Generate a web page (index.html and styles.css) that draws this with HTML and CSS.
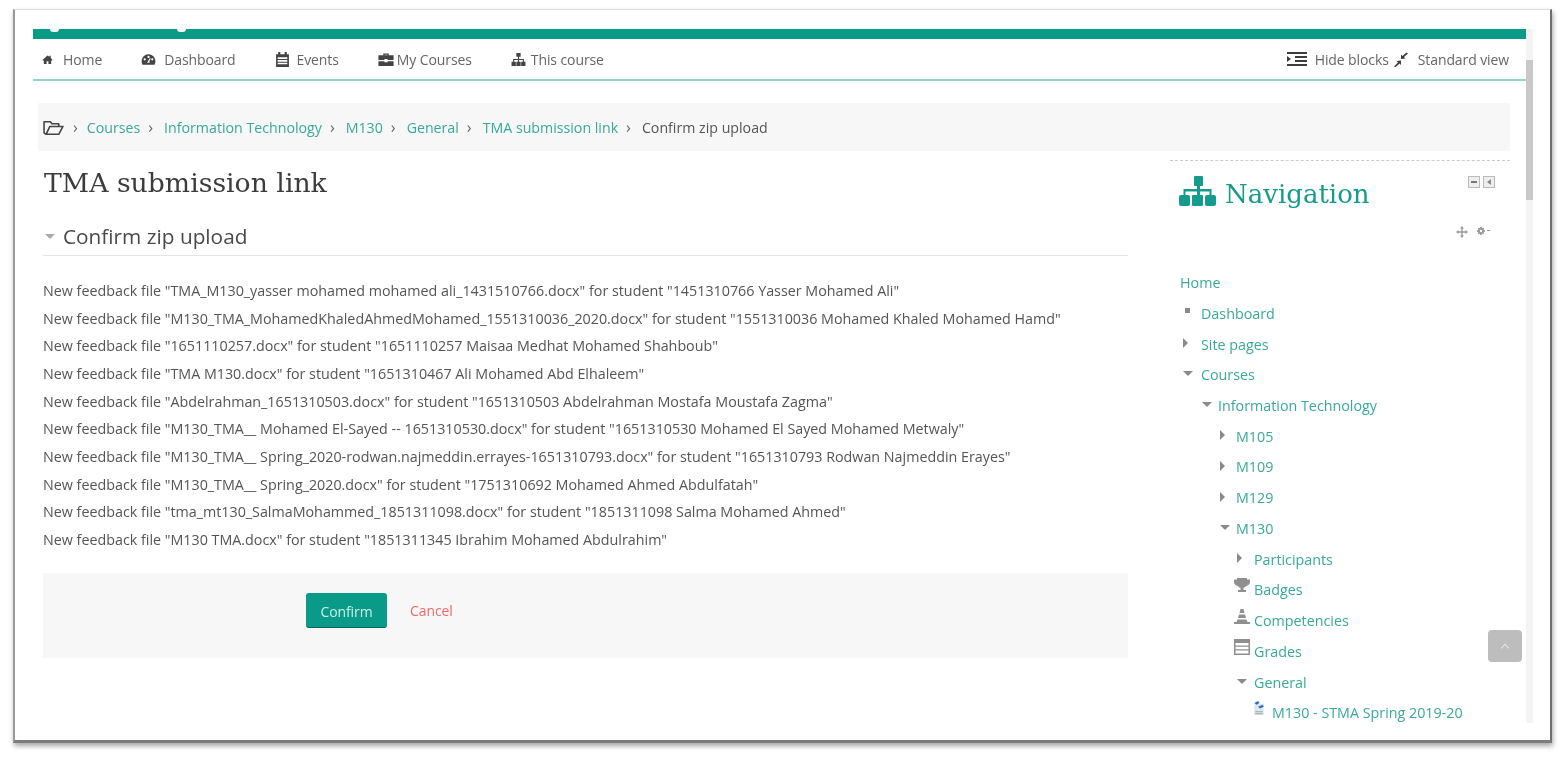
FILE: index.html
```html
<!DOCTYPE html>
<html lang="en">
<head>
<meta charset="utf-8">
<title>TMA submission link</title>
<link rel="stylesheet" href="styles.css">
</head>
<body>
<div class="frame">
  <div class="page">
    <div class="content">
      <div class="topbar"><span class="bump bump-a"></span><span class="bump bump-b"></span></div>
      <nav class="menu">
        <div class="menu-left">
          <a class="menu-item home"><svg class="ico" viewBox="0 0 12 12"><path d="M6 1.500 .5 6.500l.8.8L2 6.700V11h3V8h2v3h3V6.700l.7.6.8-.8L9.500 4.200V2H8v.9z"/></svg>Home</a>
          <a class="menu-item dash"><svg class="ico ico-dash" viewBox="0 0 16 12"><path fill-rule="evenodd" d="M8 1a7.500 7.500 0 0 0-6.500 11h13A7.500 7.500 0 0 0 8 1zM4 7.500a1.200 1.200 0 1 1 0-2.400 1.200 1.200 0 0 1 0 2.400zM8 5a1.200 1.200 0 1 1 0-2.400A1.200 1.200 0 0 1 8 5zm1.500 5h-3l.9-1.500L9.500 5l.8.3-1.500 3.600zM12 7.500a1.200 1.200 0 1 1 0-2.400 1.200 1.200 0 0 1 0 2.400z"/></svg>Dashboard</a>
          <a class="menu-item events"><svg class="ico ico-cal" viewBox="0 0 14 14"><path fill-rule="evenodd" d="M3 0h2v2h4V0h2v2h2v12H1V2h2zM2.500 5v1.500h9V5zm0 2.500V9h9V7.500zm0 2.500v1.500h9V10z"/></svg>Events</a>
          <a class="menu-item courses"><svg class="ico ico-brief" viewBox="0 0 14 12"><path fill-rule="evenodd" d="M4.500 2V.5h5V2H14v4.500H8.500V5.500h-3v1H0V2zM5.700 1.500V2h2.600v-.5zM0 7.500h5.500v1h3v-1H14V12H0z"/></svg>My Courses</a>
          <a class="menu-item"><svg class="ico ico-site" viewBox="0 0 14 12"><path d="M5 0h4v3.500H7.500V5.500H12V8h1.500v4h-4V8H11V6.500H7.500V8H9v4H5V8h1.500V6.500H3V8h1.500v4h-4V8H2V5.500h4.500v-2H5z"/></svg>This course</a>
        </div>
        <div class="menu-right">
          <svg class="ico-outdent" viewBox="0 0 20 14"><path d="M0 0h20v2H0zM8 4h12v2H8zM8 8h12v2H8zM0 12h20v2H0zM0 4l4 3-4 3z"/></svg>
          <a class="menu-item hide">Hide blocks</a>
          <svg class="ico-compress" viewBox="0 0 16 14"><path d="M1 14l4-4-1.500-1.500L8 8v4.500L6.500 11 2.500 14.500zM15 1l-4 3.500 1.500 1.500L8 6.500V2l1.500 1.500L13.500 0z"/></svg>
          <a class="menu-item std">Standard view</a>
        </div>
      </nav>
      <div class="crumbs">
        <svg class="ico-folder" viewBox="0 0 20 16"><path fill="none" stroke="#444" stroke-width="1.500" stroke-linejoin="round" d="M3 14.500 1 13V2.500h6l1.500 2H15V7M3 14.500h12L19 7H6.500z"/></svg>
        <span class="sep">›</span><a>Courses</a>
        <span class="sep">›</span><a>Information Technology</a>
        <span class="sep">›</span><a>M130</a>
        <span class="sep">›</span><a>General</a>
        <span class="sep">›</span><a>TMA submission link</a>
        <span class="sep">›</span><span class="current">Confirm zip upload</span>
      </div>
      <div class="columns">
        <main class="main">
          <h1 class="title">TMA submission link</h1>
          <h2 class="section"><span class="tri-down big"></span>Confirm zip upload</h2>
          <div class="lines">
            <p>New feedback file "TMA_M130_yasser mohamed mohamed ali_1431510766.docx" for student "1451310766 Yasser Mohamed Ali"</p>
            <p>New feedback file "M130_TMA_MohamedKhaledAhmedMohamed_1551310036_2020.docx" for student "1551310036 Mohamed Khaled Mohamed Hamd"</p>
            <p>New feedback file "1651110257.docx" for student "1651110257 Maisaa Medhat Mohamed Shahboub"</p>
            <p>New feedback file "TMA M130.docx" for student "1651310467 Ali Mohamed Abd Elhaleem"</p>
            <p>New feedback file "Abdelrahman_1651310503.docx" for student "1651310503 Abdelrahman Mostafa Moustafa Zagma"</p>
            <p>New feedback file "M130_TMA__ Mohamed El-Sayed -- 1651310530.docx" for student "1651310530 Mohamed El Sayed Mohamed Metwaly"</p>
            <p>New feedback file "M130_TMA__ Spring_2020-rodwan.najmeddin.errayes-1651310793.docx" for student "1651310793 Rodwan Najmeddin Erayes"</p>
            <p>New feedback file "M130_TMA__ Spring_2020.docx" for student "1751310692 Mohamed Ahmed Abdulfatah"</p>
            <p>New feedback file "tma_mt130_SalmaMohammed_1851311098.docx" for student "1851311098 Salma Mohamed Ahmed"</p>
            <p>New feedback file "M130 TMA.docx" for student "1851311345 Ibrahim Mohamed Abdulrahim"</p>
          </div>
          <div class="actions">
            <button class="confirm">Confirm</button>
            <a class="cancel">Cancel</a>
          </div>
        </main>
        <aside class="side">
          <div class="block-head">
            <svg class="ico-nav" viewBox="0 0 37 30"><path d="M15 1a1 1 0 0 1 1-1h7a1 1 0 0 1 1 1v8a1 1 0 0 1-1 1h-2v3h11.500v6H35a2 2 0 0 1 2 2v7a2 2 0 0 1-2 2h-7a2 2 0 0 1-2-2v-7a2 2 0 0 1 2-2h2.500v-3.500H21V19h2a1 1 0 0 1 1 1v9a1 1 0 0 1-1 1h-9a1 1 0 0 1-1-1v-9a1 1 0 0 1 1-1h4v-3.500H6.500V19H9a2 2 0 0 1 2 2v7a2 2 0 0 1-2 2H2a2 2 0 0 1-2-2v-7a2 2 0 0 1 2-2h2.500v-6H18v-3h-2a1 1 0 0 1-1-1z"/></svg>
            <span class="block-title">Navigation</span>
            <span class="block-ctrl"><span class="ctrl"><span class="ctrl-minus"></span></span><span class="ctrl"><span class="ctrl-arrow"></span></span></span>
          </div>
          <div class="edit-ctrl">
            <svg class="ico-move" viewBox="0 0 12 12"><path d="M6 0l2 2.500H6.700v2.800h2.800V4L12 6 9.500 8V6.700H6.700v2.800H8L6 12 4 9.500h1.300V6.700H2.500V8L0 6l2.500-2v1.300h2.800V2.500H4z"/></svg>
            <svg class="ico-gear" viewBox="0 0 10 10"><path fill-rule="evenodd" d="M4 0h2l.3 1.500 1.300-.8 1.400 1.400-.8 1.300L10 4v2l-1.800.3.800 1.300L7.600 9l-1.300-.8L6 10H4l-.3-1.800L2.400 9 1 7.600l.8-1.300L0 6V4l1.800-.3L1 2.100 2.400.7l1.300.8zM5 3.500a1.500 1.500 0 1 0 0 3 1.500 1.500 0 0 0 0-3z"/></svg>
            <span class="tiny-caret"></span>
          </div>
          <ul class="tree">
            <li class="lvl0 home-row">Home</li>
            <li class="lvl0"><span class="mark"><span class="sq"></span></span>Dashboard</li>
            <li class="lvl0"><span class="mark"><span class="tri-right"></span></span>Site pages</li>
            <li class="lvl0"><span class="mark"><span class="tri-down"></span></span>Courses</li>
            <li class="lvl1"><span class="mark"><span class="tri-down"></span></span>Information Technology</li>
            <li class="lvl2"><span class="mark"><span class="tri-right"></span></span>M105</li>
            <li class="lvl2"><span class="mark"><span class="tri-right"></span></span>M109</li>
            <li class="lvl2"><span class="mark"><span class="tri-right"></span></span>M129</li>
            <li class="lvl2"><span class="mark"><span class="tri-down"></span></span>M130</li>
            <li class="lvl3"><span class="mark"><span class="tri-right"></span></span>Participants</li>
            <li class="lvl3"><span class="mark"><svg class="tree-ico" viewBox="0 0 16 16"><path d="M3 0h10v1.500h3V4c0 2-1.500 3.500-4 4-.6 1-1.500 1.500-2.500 1.700V12H12v2H4v-2h2.500V9.700C5.500 9.500 4.600 9 4 8 1.500 7.500 0 6 0 4V1.500h3z"/></svg></span>Badges</li>
            <li class="lvl3"><span class="mark"><svg class="tree-ico" viewBox="0 0 16 16"><path d="M6.500 0h3l1 4h-5zM5 5.500h6l1 3.500H4zM3.500 10.500h9l1 2.500H16v2H0v-2h2.500z"/></svg></span>Competencies</li>
            <li class="lvl3"><span class="mark"><svg class="tree-ico" viewBox="0 0 16 16"><path fill-rule="evenodd" d="M0 0h16v16H0zM1.500 4v2.500h13V4zm0 3.800v2.400h13V7.800zm0 3.700v3h13v-3z"/></svg></span>Grades</li>
            <li class="lvl3"><span class="mark"><span class="tri-down"></span></span>General</li>
            <li class="lvl4"><span class="mark"><svg class="tree-ico file" viewBox="0 0 14 16"><path fill="#dfe6ec" d="M2 3h10v12H2z"/><path fill="#2a6fc0" d="M2 2l4-2 1.500 2-3 2zM6 6l5-2 1 2-4 2z"/><path fill="#9aa7b5" d="M3 11h8v1H3zM3 13h8v1H3z"/></svg></span>M130 - STMA Spring 2019-20</li>
          </ul>
        </aside>
      </div>
    </div>
    <div class="scrollbar"><div class="thumb"></div></div>
    <a class="to-top"><span class="chev"></span></a>
  </div>
</div>
</body>
</html>
```

FILE: styles.css
```css
* { box-sizing: border-box; }
html, body { margin: 0; height: 100%; background: #fff; overflow: hidden; }
body { padding: 9px 12px 18px 13px; font-family: "Open Sans", "Noto Sans", sans-serif; font-size: 14px; color: #555; }
.frame { height: 734px; background: #fff; border-top: 1px solid #ddd; border-left: 2px solid #9a9a9a; border-right: 2px solid #6f6f6f; border-bottom: 3px solid #7c7c7c; box-shadow: 1px 3px 5px rgba(0,0,0,.35); overflow: hidden; filter: blur(.5px); }
.page { position: relative; height: 100%; padding: 19px 18px 17px 18px; display: flex; }
.content { width: 1493px; flex: none; display: flex; flex-direction: column; overflow: hidden; }
.topbar { position: relative; flex: none; height: 10px; background: #0a9a88; }
.bump { position: absolute; top: 0; width: 9px; height: 3px; background: #f4f4f4; border-radius: 0 0 3px 3px; }
.bump-a { left: 17px; }
.bump-b { left: 144px; }
.menu { flex: none; height: 42px; border-bottom: 2px solid #8ed5cb; display: flex; justify-content: space-between; align-items: center; padding: 0 17px 0 9px; }
.menu-left, .menu-right { display: flex; align-items: center; }
.menu-item { display: flex; align-items: center; color: #666; font-size: 14px; letter-spacing: -.1px; white-space: nowrap; }
.menu-left .menu-item { margin-right: 39px; }
.ico { width: 11px; height: 11px; fill: #444; margin-right: 10px; }
.ico-dash { width: 15px; height: 12px; margin-right: 8px; }
.ico-cal { width: 15px; height: 15px; margin-right: 7px; }
.ico-brief { width: 16px; height: 13px; margin-right: 3px; }
.ico-site { width: 15px; height: 13px; margin-right: 5px; }
.ico-outdent { width: 20px; height: 14px; fill: #3d3d3d; margin-right: 8px; }
.ico-compress { width: 16px; height: 15px; fill: #3d3d3d; margin: 0 9px 0 4px; }
.crumbs { flex: none; height: 48px; margin: 22px 16px 0 5px; background: #f7f7f7; display: flex; align-items: center; padding-left: 5px; font-size: 14.200px; white-space: nowrap; }
.crumbs a { color: #3aa99a; }
.crumbs .current { color: #555; }
.ico-folder { width: 21px; height: 17px; margin-right: 9px; }
.sep { color: #666; margin: 0 9px 0 0; font-size: 16px; line-height: 1; }
.crumbs a + .sep { margin: 0 11px 0 8px; }
.columns { flex: 1; min-height: 0; display: flex; margin: 9px 16px 0 10px; }
.main { width: 1085px; flex: none; }
.title { margin: 0; height: 46px; padding: 5px 0 0 1px; font-family: "DejaVu Serif", "Liberation Serif", serif; font-weight: 400; font-size: 26.700px; line-height: 36px; color: #3c3c3c; white-space: nowrap; }
.section { margin: 11px 0 0; height: 39px; display: flex; align-items: center; border-bottom: 1px solid #e4e4e4; font-weight: 400; font-size: 20.800px; color: #4a4a4a; }
.tri-down { display: inline-block; width: 0; height: 0; border-left: 5px solid transparent; border-right: 5px solid transparent; border-top: 5px solid #8a8a8a; }
.tri-down.big { border-top-color: #aaa; margin: 0 8px 0 2px; }
.tri-right { display: inline-block; width: 0; height: 0; border-top: 5px solid transparent; border-bottom: 5px solid transparent; border-left: 5px solid #8a8a8a; }
.lines { padding-top: 21px; }
.lines p { margin: 0; height: 27.670px; line-height: 27.670px; font-size: 14.300px; color: #555; white-space: nowrap; }
.actions { height: 85px; margin-top: 19px; background: #f7f7f7; display: flex; align-items: flex-start; padding: 20px 0 0 263px; }
.confirm { width: 81px; height: 35px; padding: 0 0 0 0; border: 0; border-bottom: 1px solid #07695d; border-radius: 3px; background: #0a9a88; color: #c9f0e8; font: 14px/37px "Open Sans", sans-serif; letter-spacing: -.1px; }
.cancel { margin-left: 23px; color: #ee6a66; font-size: 14px; line-height: 35px; letter-spacing: -.1px; }
.side { width: 340px; flex: none; margin-left: 42px; border-top: 1px dashed #ccc; height: 580px; overflow: hidden; }
.block-head { display: flex; align-items: flex-start; height: 56px; padding: 15px 0 0 9px; }
.ico-nav { width: 37px; height: 30px; fill: #159b8b; margin-right: 9px; }
.block-title { font-family: "DejaVu Serif", "Liberation Serif", serif; font-size: 26px; line-height: 36px; color: #159b8b; flex: 1; }
.block-ctrl { display: flex; gap: 3px; margin: 0 15px 0 0; }
.ctrl { width: 12px; height: 12px; border: 1px solid #bbb; background: #eee; display: flex; align-items: center; justify-content: center; }
.ctrl-minus { width: 6px; height: 2px; background: #777; }
.ctrl-arrow { width: 0; height: 0; border-top: 3px solid transparent; border-bottom: 3px solid transparent; border-right: 4px solid #888; }
.edit-ctrl { display: flex; align-items: center; justify-content: flex-end; height: 16px; margin-top: 7px; padding-right: 20px; gap: 6px; }
.ico-move { width: 12px; height: 12px; fill: #999; margin-right: 3px; }
.ico-gear { width: 8px; height: 8px; fill: #999; margin-bottom: 3px; }
.tiny-caret { width: 3px; height: 1px; background: #999; margin: 0 0 3px -4px; }
.tree { list-style: none; margin: 27.300px 0 0; padding: 0; }
.tree li { position: relative; display: flex; align-items: center; height: 30.730px; color: #3aa99a; font-size: 14.300px; white-space: nowrap; }
.lvl0 { padding-left: 10px; }
.lvl1 { padding-left: 30px; }
.lvl2 { padding-left: 48px; }
.lvl3 { padding-left: 65px; }
.lvl4 { padding-left: 83px; }
.mark { width: 21px; flex: none; display: flex; align-items: center; padding-left: 3px; margin-top: -2px; }
.lvl1 .mark, .lvl2 .mark { width: 18px; padding-left: 2px; }
.lvl3 .mark, .lvl4 .mark { width: 19px; padding-left: 2px; }
.sq { width: 5px; height: 5px; background: #8a8a8a; margin: -4px 0 0 2px; }
.tree-ico { width: 16px; height: 16px; fill: #8f8f8f; margin: -6px 0 0 -3px; }
.tree-ico.file { width: 14px; height: 15px; }
.scrollbar { width: 7px; flex: none; background: #f4f4f4; height: 100%; }
.thumb { width: 7px; height: 140px; margin-top: 31px; background: #c8c8c8; }
.to-top { position: absolute; left: 1473px; top: 620px; width: 34px; height: 32px; border-radius: 4px; background: #bdbdbd; display: flex; align-items: center; justify-content: center; }
.chev { width: 6px; height: 6px; border-left: 1.500px solid #e6e6e6; border-top: 1.500px solid #e6e6e6; transform: rotate(45deg); margin-top: 3px; }
```
